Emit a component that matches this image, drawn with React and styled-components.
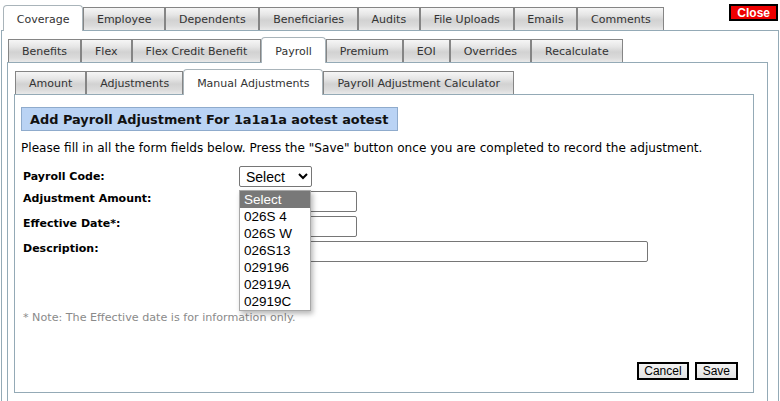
import React from "react";
import styled, { createGlobalStyle } from "styled-components";

const Global = createGlobalStyle`
  html, body {
    margin: 0;
    padding: 0;
    background: #ffffff;
  }
  body {
    font-family: Verdana, "DejaVu Sans", sans-serif;
    font-size: 11px;
    color: #000;
    overflow: hidden;
  }
`;

const Page = styled.div`
  width: 780px;
  height: 401px;
  padding: 5px 1px 0 1px;
  box-sizing: border-box;
  overflow: hidden;
`;

const TopRow = styled.div`
  display: flex;
  align-items: flex-end;
  justify-content: space-between;
  padding-left: 2px;
  height: 25px;
`;

const TabRow = styled.div`
  display: flex;
  align-items: flex-end;
  padding-left: ${(p) => p.$indent || 0}px;
`;

const Tab = styled.div`
  position: relative;
  box-sizing: border-box;
  height: ${(p) => (p.$active ? 26 : 23)}px;
  margin-bottom: ${(p) => (p.$active ? -1 : 0)}px;
  padding: 0 ${(p) => p.$pad}px;
  display: flex;
  align-items: center;
  font-family: Verdana, "DejaVu Sans", sans-serif;
  font-size: 11px;
  color: #333;
  white-space: nowrap;
  border: 1px solid ${(p) => (p.$active ? "#a9b4ba" : "#858585")};
  border-bottom: none;
  border-radius: ${(p) => (p.$active ? "4px 4px 0 0" : "0")};
  background: ${(p) =>
    p.$active
      ? "#ffffff"
      : "linear-gradient(to bottom, #f6f6f6 0%, #e6e6e6 30%, #d2d2d2 55%, #dadada 80%, #e9e9e9 100%)"};
  z-index: ${(p) => (p.$active ? 2 : 1)};
  padding-top: ${(p) => (p.$active ? 1 : 0)}px;
`;

const CloseButton = styled.button`
  align-self: flex-start;
  margin: -1px 1px 0 0;
  height: 17px;
  padding: 0 6px;
  border: 2px solid #000;
  background: #ee0000;
  color: #fff;
  font-family: "Liberation Sans", Arial, sans-serif;
  font-weight: bold;
  font-size: 12px;
  line-height: 12px;
`;

const Panel = styled.div`
  position: relative;
  border: 1px solid #94aab6;
  border-bottom: ${(p) => (p.$closed ? "1px solid #94aab6" : "none")};
  padding: ${(p) => p.$pad};
  height: ${(p) => p.$height || "auto"};
  box-sizing: border-box;
  background: #fff;
`;

const Content = styled.div`
  display: flex;
  flex-direction: column;
  align-items: flex-start;
  height: 100%;
  box-sizing: border-box;
`;

const Heading = styled.h2`
  margin: 0;
  padding: 0 9px 0 8px;
  height: 22px;
  display: flex;
  align-items: center;
  background: #bad3f4;
  border: 1px solid #8fabcc;
  font-family: Verdana, "DejaVu Sans", sans-serif;
  font-size: 12.9px;
  font-weight: bold;
  color: #111;
`;

const Intro = styled.p`
  margin: 10px 0 0 0;
  font-size: 12.1px;
  line-height: 15px;
  color: #000;
`;

const FormGrid = styled.div`
  display: grid;
  grid-template-columns: 218px auto;
  row-gap: 4px;
  margin-top: 10px;
  align-items: start;
`;

const Label = styled.label`
  padding: ${(p) => (p.$first ? 4 : 1)}px 0 0 2px;
  font-weight: bold;
  font-size: 11px;
  line-height: 14px;
  color: #000;
`;

const Field = styled.div`
  position: relative;
`;

const Input = styled.input`
  box-sizing: border-box;
  width: ${(p) => p.$width}px;
  height: 21px;
  border: 1px solid #767676;
  border-radius: 2px;
  padding: 0 2px;
  font-family: "Liberation Sans", Arial, sans-serif;
  font-size: 11px;
  display: block;
  &::placeholder {
    color: #bbb;
  }
`;

const Select = styled.select`
  box-sizing: border-box;
  width: 73px;
  height: 21px;
  border: 1px solid #767676;
  border-radius: 2px;
  font-family: "Liberation Sans", Arial, sans-serif;
  font-size: 14px;
  color: #000;
  background: #fff;
  padding: 0 0 0 2px;
  display: block;
`;

const DropList = styled.ul`
  position: absolute;
  top: 24px;
  left: 0;
  width: 72px;
  margin: 0;
  padding: 0;
  list-style: none;
  background: #fff;
  border: 1px solid #a8a8a8;
  box-shadow: 2px 3px 5px rgba(0, 0, 0, 0.28);
  box-sizing: border-box;
  z-index: 10;
`;

const DropItem = styled.li`
  height: 17px;
  line-height: 17px;
  padding-left: 4px;
  font-family: "Liberation Sans", Arial, sans-serif;
  font-size: 13.5px;
  color: ${(p) => (p.$selected ? "#fff" : "#000")};
  background: ${(p) => (p.$selected ? "#787878" : "#fff")};
`;

const Note = styled.p`
  margin: 49px 0 0 2px;
  font-size: 11.15px;
  line-height: 14px;
  color: #8a8a8a;
`;

const Actions = styled.div`
  display: flex;
  gap: 6px;
  margin-top: auto;
  margin-bottom: 12px;
  align-self: flex-end;
  margin-right: 9px;
`;

const ActionButton = styled.button`
  height: 18px;
  padding: 0 ${(p) => p.$pad || 5}px;
  border: 2px solid #000;
  background: linear-gradient(to bottom, #f4f4f4, #e2e2e2);
  font-family: "Liberation Sans", Arial, sans-serif;
  font-size: 12px;
  line-height: 12px;
  color: #000;
`;

const topTabs = ["Coverage", "Employee", "Dependents", "Beneficiaries", "Audits", "File Uploads", "Emails", "Comments"];
const midTabs = ["Benefits", "Flex", "Flex Credit Benefit", "Payroll", "Premium", "EOI", "Overrides", "Recalculate"];
const lowTabs = ["Amount", "Adjustments", "Manual Adjustments", "Payroll Adjustment Calculator"];
const codes = ["Select", "026S 4", "026S W", "026S13", "029196", "02919A", "02919C"];

function Tabs({ items, active, indent, pad = 13 }) {
  return (
    <TabRow $indent={indent}>
      {items.map((t) => (
        <Tab key={t} $active={t === active} $pad={pad}>
          {t}
        </Tab>
      ))}
    </TabRow>
  );
}

export default function App() {
  return (
    <Page>
      <Global />
      <TopRow>
        <Tabs items={topTabs} active="Coverage" pad={12.75} />
        <CloseButton>Close</CloseButton>
      </TopRow>
      <Panel $pad="6px 10px 0 5px" $height="380px">
        <Tabs items={midTabs} active="Payroll" indent={1} />
        <Panel $pad="6px 13px 0 6px" $height="340px">
          <Tabs items={lowTabs} active="Manual Adjustments" indent={1} />
          <Panel $closed $pad="12px 6px 0 6px" $height="299px">
            <Content>
              <Heading>Add Payroll Adjustment For 1a1a1a aotest aotest</Heading>
              <Intro>
                Please fill in all the form fields below. Press the "Save" button once you are completed to record the
                adjustment.
              </Intro>
              <FormGrid>
                <Label $first>Payroll Code:</Label>
                <Field>
                  <Select defaultValue="Select">
                    {codes.map((c) => (
                      <option key={c}>{c}</option>
                    ))}
                  </Select>
                  <DropList>
                    {codes.map((c, i) => (
                      <DropItem key={c} $selected={i === 0}>
                        {c}
                      </DropItem>
                    ))}
                  </DropList>
                </Field>
                <Label>Adjustment Amount:</Label>
                <Field>
                  <Input $width={118} />
                </Field>
                <Label>Effective Date*:</Label>
                <Field>
                  <Input $width={118} placeholder="mm/dd/yyyy" />
                </Field>
                <Label>Description:</Label>
                <Field>
                  <Input $width={409} />
                </Field>
              </FormGrid>
              <Note>* Note: The Effective date is for information only.</Note>
              <Actions>
                <ActionButton>Cancel</ActionButton>
                <ActionButton $pad={6}>Save</ActionButton>
              </Actions>
            </Content>
          </Panel>
        </Panel>
      </Panel>
    </Page>
  );
}
